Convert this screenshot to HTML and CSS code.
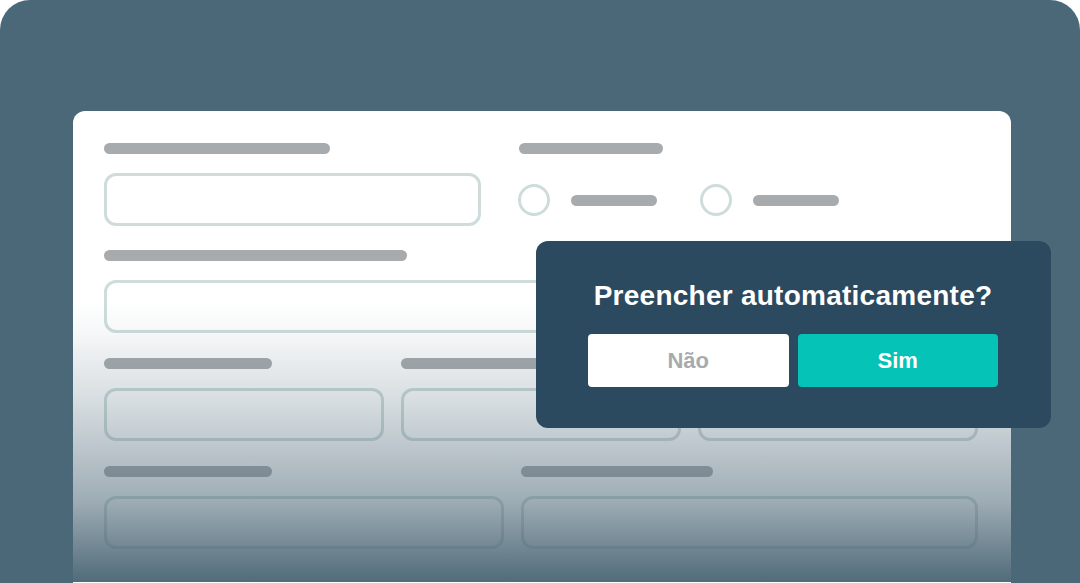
FILE: index.html
```html
<!DOCTYPE html>
<html lang="pt">
<head>
<meta charset="utf-8">
<title>Preencher automaticamente</title>
<link rel="stylesheet" href="styles.css">
</head>
<body>
<div class="frame">
  <div class="card">
    <div class="rows">
      <div class="row row-1">
        <div class="field">
          <div class="bar w226"></div>
          <div class="input"></div>
        </div>
        <div class="field">
          <div class="bar w144"></div>
          <div class="radios">
            <div class="radio"><span class="circle"></span><span class="bar w86"></span></div>
            <div class="radio"><span class="circle"></span><span class="bar w86"></span></div>
          </div>
        </div>
      </div>
      <div class="row">
        <div class="field">
          <div class="bar w303"></div>
          <div class="input"></div>
        </div>
      </div>
      <div class="row row-3">
        <div class="field"><div class="bar w168"></div><div class="input"></div></div>
        <div class="field"><div class="bar w168"></div><div class="input"></div></div>
        <div class="field"><div class="bar w168"></div><div class="input"></div></div>
      </div>
      <div class="row row-4">
        <div class="field"><div class="bar w168"></div><div class="input"></div></div>
        <div class="field"><div class="bar w192"></div><div class="input"></div></div>
      </div>
    </div>
    <div class="fade"></div>
  </div>
  <div class="popup">
    <div class="popup-title">Preencher automaticamente?</div>
    <div class="popup-actions">
      <button class="btn btn-no">Não</button>
      <button class="btn btn-yes">Sim</button>
    </div>
  </div>
</div>
</body>
</html>
```

FILE: styles.css
```css
* { box-sizing: border-box; }
html, body { margin: 0; padding: 0; background: #ffffff; }
body { width: 1080px; height: 583px; overflow: hidden; font-family: "Liberation Sans", Arial, sans-serif; }

.frame {
  position: relative;
  width: 1080px;
  height: 583px;
  background: #4b6878;
  border-radius: 30px 30px 0 0;
  padding: 111px 0 0 73px;
}

.card {
  position: relative;
  width: 938px;
  height: 472px;
  background: #ffffff;
  border-radius: 12px 12px 0 0;
  overflow: hidden;
  padding: 31px 33px 0 31px;
}

.rows { display: flex; flex-direction: column; gap: 25px; }

.row { display: grid; grid-template-columns: 1fr; column-gap: 17px; }
.row-1 { grid-template-columns: 377px 1fr; column-gap: 38px; margin-bottom: -1px; }
.row-1 > .field:first-child .bar { margin-top: 1px; }
.row-3 { grid-template-columns: repeat(3, 1fr); }
.row-4 { grid-template-columns: 400px 1fr; }

.field { display: flex; flex-direction: column; }

.bar {
  display: block;
  height: 11px;
  border-radius: 6px;
  background: #a7abae;
  margin-bottom: 19px;
}
.w86 { width: 86px; }
.w144 { width: 144px; margin-top: 1px; }
.w168 { width: 168px; }
.w192 { width: 192px; }
.w226 { width: 226px; }
.w303 { width: 303px; }

.input {
  height: 53px;
  border: 3px solid #cfdcdb;
  border-radius: 12px;
}

.radios { display: flex; align-items: center; margin-top: 11px; gap: 44px; }
.radio { display: flex; align-items: center; }
.circle {
  width: 32px;
  height: 32px;
  border: 3px solid #cfdcdb;
  border-radius: 50%;
  margin-left: -1px;
}
.radio .bar { margin: 0 0 0 21px; }

.fade {
  position: absolute;
  left: 0;
  right: 0;
  top: 0;
  bottom: 1px;
  background: linear-gradient(to bottom,
    rgba(77,104,119,0) 40%,
    rgba(77,104,119,0.05) 47%,
    rgba(77,104,119,0.22) 61%,
    rgba(77,104,119,0.55) 83%,
    rgba(77,104,119,0.98) 100%);
  pointer-events: none;
}

.popup {
  position: absolute;
  left: 536px;
  top: 241px;
  width: 515px;
  height: 187px;
  background: #2c4a5f;
  border-radius: 12px;
  padding: 39px 53px 0 52px;
}
.popup-title {
  color: #ffffff;
  font-weight: 700;
  font-size: 28px;
  line-height: 32px;
  letter-spacing: 0.25px;
  text-align: center;
  white-space: nowrap;
}
.popup-actions { display: flex; gap: 9px; margin-top: 22px; }
.btn {
  flex: 1;
  height: 53px;
  border: 0;
  border-radius: 4px;
  font-family: "Liberation Sans", Arial, sans-serif;
  font-weight: 700;
  font-size: 22px;
  padding: 0;
}
.btn-no { background: #ffffff; color: #a7abae; }
.btn-yes { background: #05c3b6; color: #ffffff; }
```
